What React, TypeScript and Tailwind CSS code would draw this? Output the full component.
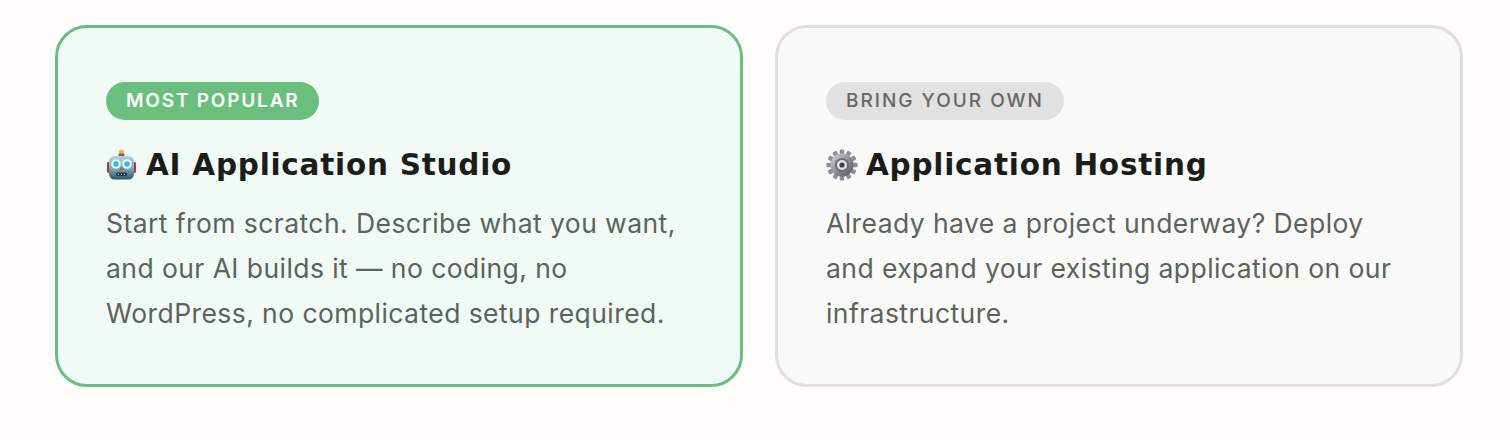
function RobotIcon() {
  return (
    <svg width="32" height="32" viewBox="0 0 32 32" className="shrink-0">
      <defs>
        <linearGradient id="robotHead" x1="0" y1="0" x2="0" y2="1">
          <stop offset="0" stopColor="#b9d3dc" />
          <stop offset="0.55" stopColor="#7fa6b4" />
          <stop offset="1" stopColor="#2f5568" />
        </linearGradient>
      </defs>
      <circle cx="15.5" cy="3" r="2.6" fill="#f2b43c" />
      <rect x="12.5" y="4.5" width="6" height="3" rx="1" fill="#6a5a8c" />
      <rect x="1" y="13" width="3.5" height="11" rx="1.4" fill="#b23a36" />
      <rect x="26.5" y="13" width="3.5" height="11" rx="1.4" fill="#b23a36" />
      <rect x="3" y="7" width="25" height="23.5" rx="5.5" fill="url(#robotHead)" />
      <circle cx="10" cy="15" r="4.8" fill="#e4f3f8" />
      <circle cx="21" cy="15" r="4.8" fill="#e4f3f8" />
      <circle cx="10" cy="15" r="2.7" fill="#35b6ea" />
      <circle cx="21" cy="15" r="2.7" fill="#35b6ea" />
      <path d="M15.5 17.5 L18 21 H13 Z" fill="#c9524a" />
      <rect x="10" y="23.5" width="11" height="3.6" rx="1.5" fill="#1f3a49" />
      <path d="M12 25.3h1M15 25.3h1M18 25.3h1" stroke="#c8d6dc" strokeWidth="1.2" />
    </svg>
  );
}

function GearIcon() {
  const teeth = [0, 30, 60, 90, 120, 150, 180, 210, 240, 270, 300, 330];
  return (
    <svg width="32" height="32" viewBox="0 0 32 32" className="shrink-0">
      <defs>
        <linearGradient id="gearBody" x1="0" y1="0" x2="1" y2="1">
          <stop offset="0" stopColor="#d4d6da" />
          <stop offset="0.5" stopColor="#8e9197" />
          <stop offset="1" stopColor="#54575d" />
        </linearGradient>
      </defs>
      {teeth.map((deg) => (
        <rect
          key={deg}
          x="13.8"
          y="0.5"
          width="4.4"
          height="7"
          rx="1"
          fill="#8b8e94"
          transform={`rotate(${deg} 16 16)`}
        />
      ))}
      <circle cx="16" cy="16" r="11.5" fill="url(#gearBody)" />
      <circle cx="16" cy="16" r="7" fill="#6b6e74" />
      <circle cx="16" cy="16" r="5" fill="#e4e5e8" />
      <circle cx="16" cy="16" r="2.6" fill="#3f4247" />
    </svg>
  );
}

function Card({
  badge,
  title,
  icon,
  lines,
  cardClass,
  badgeClass,
}: {
  badge: string;
  title: string;
  icon: React.ReactNode;
  lines: string[];
  cardClass: string;
  badgeClass: string;
}) {
  return (
    <div className={`h-[362px] rounded-[32px] border-[3px] pl-[48px] pt-[54px] ${cardClass}`}>
      <span
        className={`inline-flex h-[38px] items-center rounded-full px-[20px] text-[19px] ${badgeClass}`}
      >
        {badge}
      </span>
      <h3 className="mt-[26px] flex h-[38px] items-center gap-[8px] font-['DejaVu_Sans',sans-serif] text-[29.5px] font-bold tracking-[0.75px] text-[#1a1d1a]">
        {icon}
        {title}
      </h3>
      <p className="mt-[17px] text-[26.5px] leading-[45px] tracking-[0.43px] text-[#5a635c]">
        {lines.map((line) => (
          <span key={line} className="block whitespace-nowrap">
            {line}
          </span>
        ))}
      </p>
    </div>
  );
}

function App() {
  return (
    <div className="h-[440px] w-[1510px] overflow-hidden bg-[#fefdfa] pl-[55px] pt-[25px] font-['Inter',sans-serif]">
      <div className="grid w-[1408px] grid-cols-2 gap-[32px]">
        <Card
          badge="MOST POPULAR"
          title="AI Application Studio"
          icon={<RobotIcon />}
          lines={[
            "Start from scratch. Describe what you want,",
            "and our AI builds it — no coding, no",
            "WordPress, no complicated setup required.",
          ]}
          cardClass="border-[#69c07e] bg-[#f1faf5]"
          badgeClass="bg-[#69c07e] font-semibold tracking-[1.8px] text-white"
        />
        <Card
          badge="BRING YOUR OWN"
          title="Application Hosting"
          icon={<GearIcon />}
          lines={[
            "Already have a project underway? Deploy",
            "and expand your existing application on our",
            "infrastructure.",
          ]}
          cardClass="border-[#dfdfdf] bg-[#f9f9f7]"
          badgeClass="bg-[#e1e1e1] font-medium tracking-[2px] text-[#666666]"
        />
      </div>
    </div>
  );
}

export default App;
